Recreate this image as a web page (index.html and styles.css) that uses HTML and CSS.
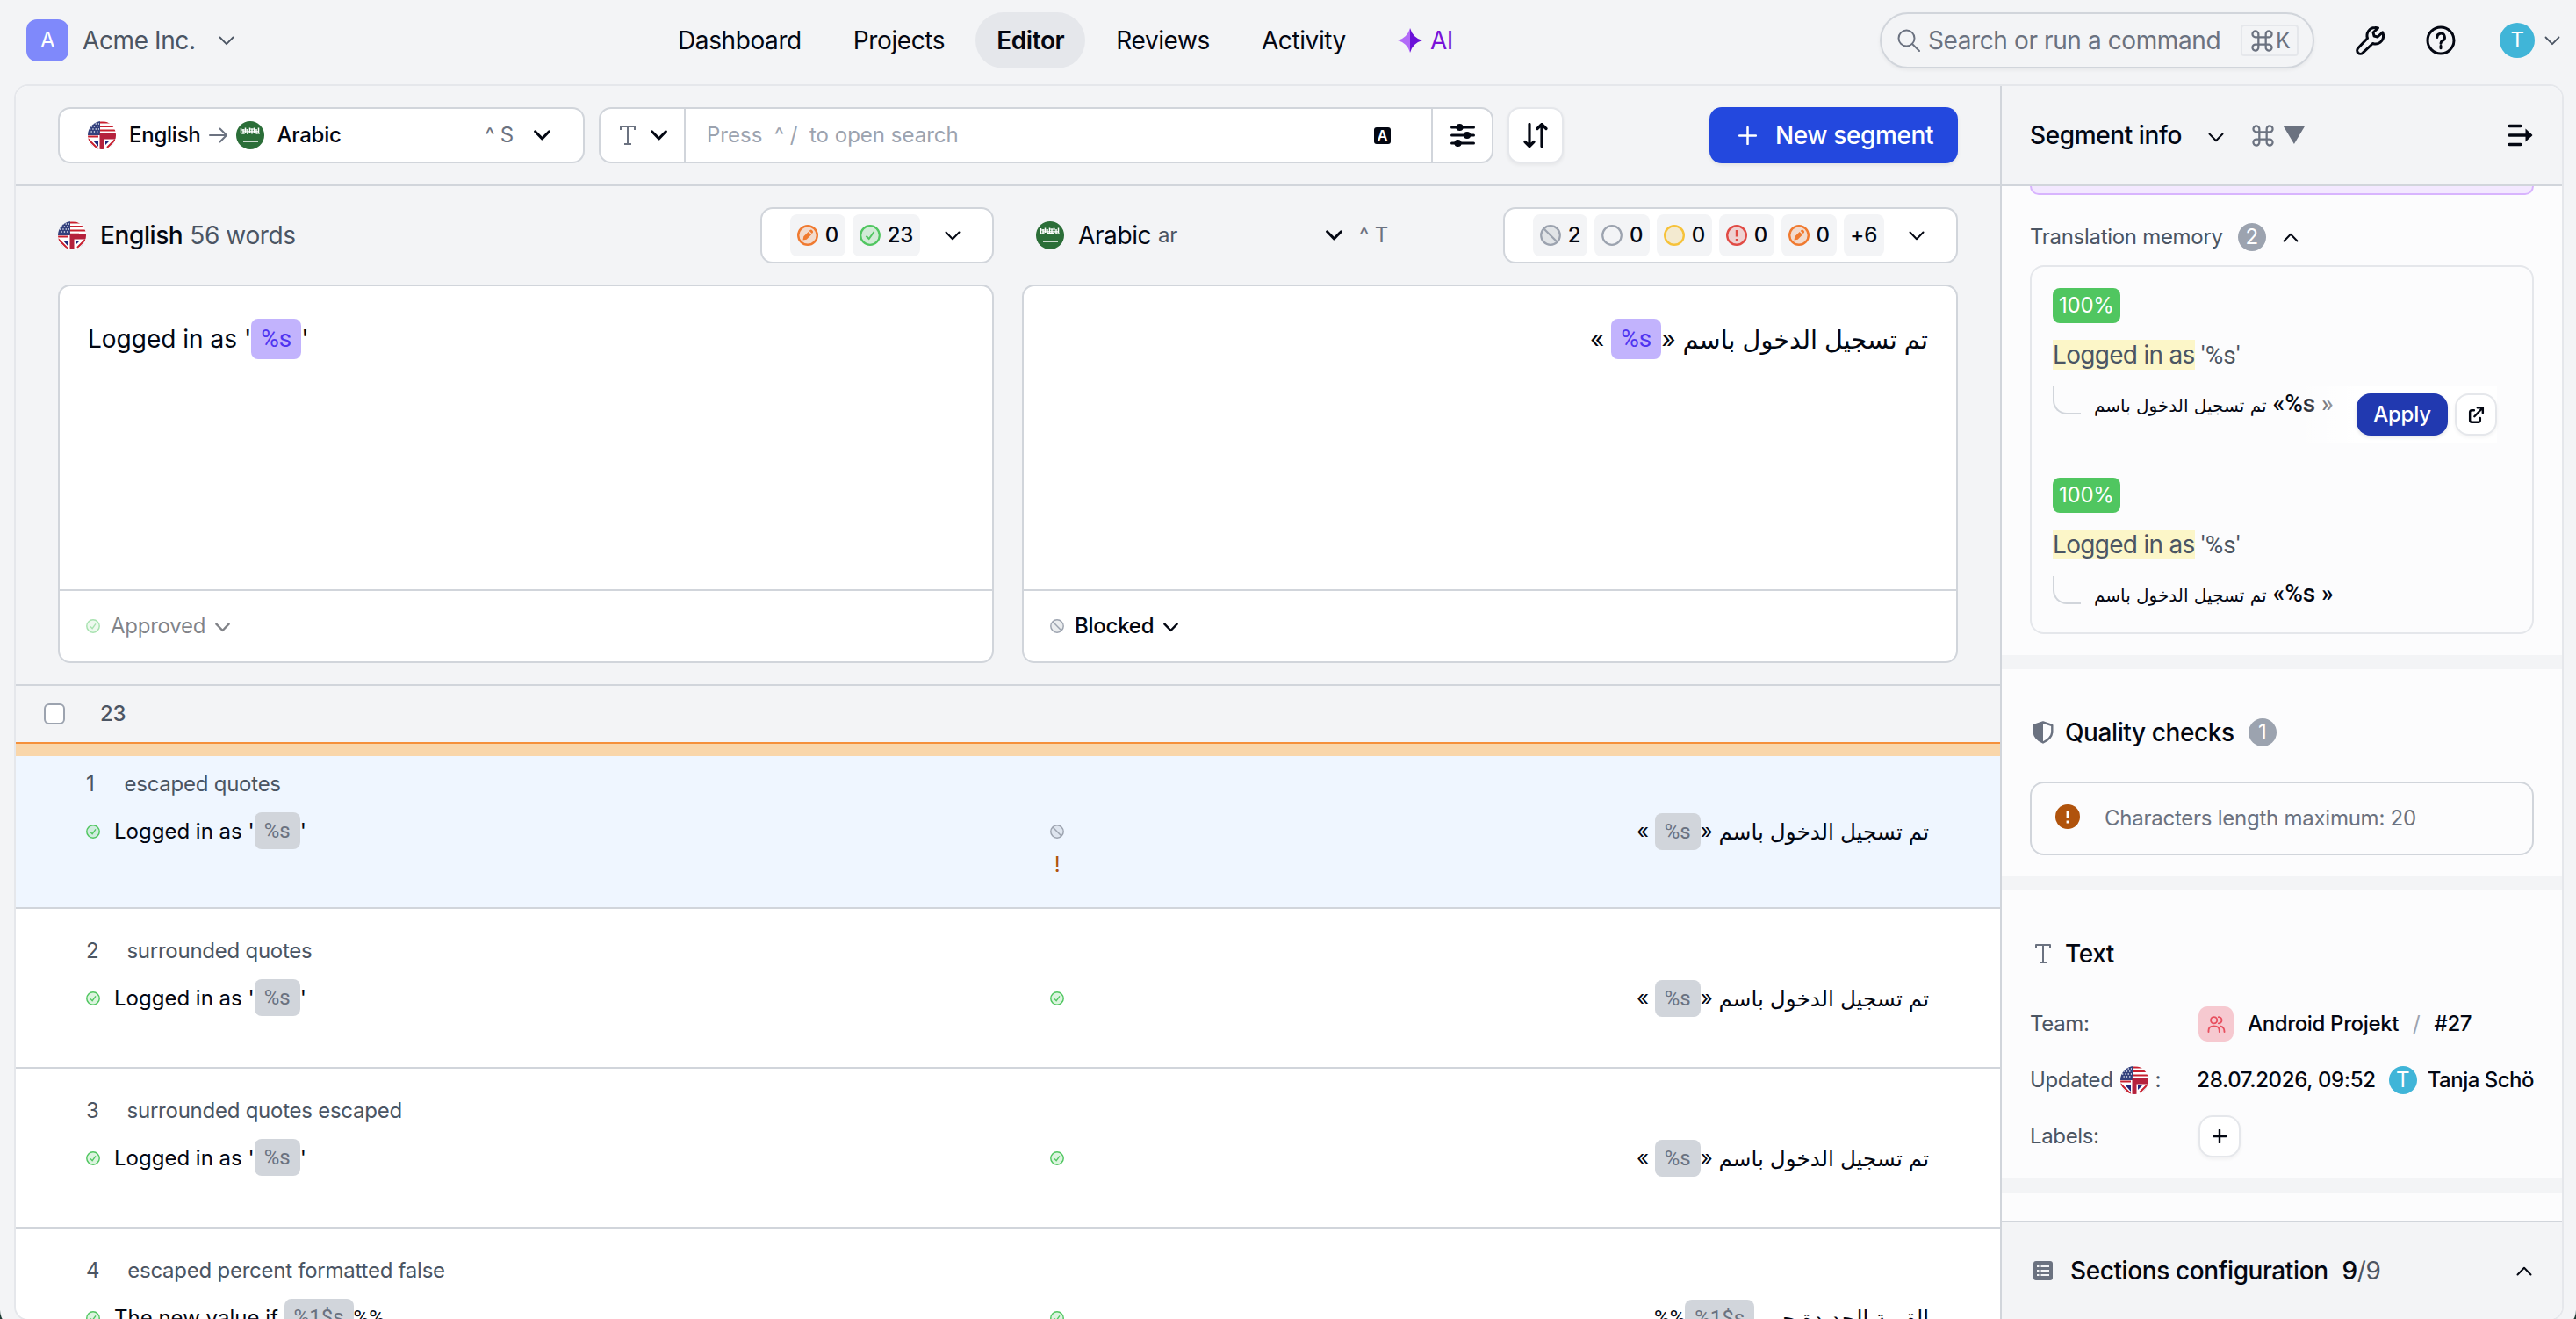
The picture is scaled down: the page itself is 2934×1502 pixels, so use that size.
FILE: index.html
```html
<!DOCTYPE html>
<html lang="en">
<head>
<meta charset="utf-8">
<title>Editor</title>
<link rel="stylesheet" href="styles.css">
</head>
<body>
<svg class="defs" aria-hidden="true">
  <symbol id="down" viewBox="0 0 18 11"><path d="M1.5 1.5 9 9.2l7.5-7.7"/></symbol>
  <symbol id="up" viewBox="0 0 18 11"><path d="M1.5 9.5 9 1.8l7.5 7.7"/></symbol>
  <symbol id="plus" viewBox="0 0 20 20"><path d="M10 1v18M1 10h18"/></symbol>
  <symbol id="approved" viewBox="0 0 24 24"><circle cx="12" cy="12" r="10.8" fill="#50c660" fill-opacity=".2" stroke="#50c660" stroke-width="2.2"/><path d="m7.5 12.8 3.2 3.2 5.8-8" fill="none" stroke="#50c660" stroke-width="2"/></symbol>
  <symbol id="blocked" viewBox="0 0 24 24"><circle cx="12" cy="12" r="10.8" fill="#9ca3af" fill-opacity=".2" stroke="#9ca3af" stroke-width="2.2"/><path d="m5 5 14 14" stroke="#9ca3af" stroke-width="2.2"/></symbol>
  <symbol id="draft" viewBox="0 0 24 24"><circle cx="12" cy="12" r="10.8" fill="#f07a30" fill-opacity=".2" stroke="#f07a30" stroke-width="2.4"/><path d="m6.500 17.500.8-4.200 5.400-5.400 3.400 3.400-5.400 5.400zM13.700 6.900l1-1q1.300-.8 2.600.500t.5 2.700l-1 1z" fill="#f07a30"/></symbol>
  <symbol id="empty" viewBox="0 0 24 24"><circle cx="12" cy="12" r="10.8" fill="none" stroke="#9ca3af" stroke-width="2.2"/></symbol>
  <symbol id="pending" viewBox="0 0 24 24"><circle cx="12" cy="12" r="10.8" fill="#f6c23a" fill-opacity=".2" stroke="#f6c23a" stroke-width="2.4"/></symbol>
  <symbol id="rejected" viewBox="0 0 24 24"><circle cx="12" cy="12" r="10.8" fill="#e14b45" fill-opacity=".2" stroke="#e14b45" stroke-width="2.4"/><path d="M12 6v7.5M12 16v2.3" stroke="#e14b45" stroke-width="2.4"/></symbol>
  <symbol id="en" viewBox="0 0 32 32">
    <clipPath id="disc"><circle cx="16" cy="16" r="16"/></clipPath>
    <g clip-path="url(#disc)">
      <path fill="#fff" d="M0 0h32v32H0z"/>
      <path stroke="#c8202f" stroke-width="2.2" d="M14 1.5h18M14 6h18M14 10.5h18M14 14.8h10"/>
      <path fill="#33407c" d="M0 0h14v16H0z"/>
      <path stroke="#dfe3f0" stroke-width="1.3" stroke-dasharray="1.3 2" d="M2 3h11M3.500 6h10M2 9h11M3.500 12h10"/>
      <path fill="#20267a" d="M0 22.500 9 32H0zM6 22h6v7zM20 22h5l-5 5zM32 22v10h-9z"/>
      <path fill="#fff" d="M0 16h14v4H0z"/>
      <path stroke="#c8202f" stroke-width="2" d="m0 20 12 12M31 21l-9 9M0 17.500h12"/>
      <path fill="#fff" d="M12 18h8v14h-8z"/>
      <path fill="#b5213c" d="M14 14h18v6.500H14zM13.500 14h5v18h-5z"/>
    </g>
  </symbol>
  <symbol id="ar" viewBox="0 0 32 32">
    <circle cx="16" cy="16" r="16" fill="#2b6e38"/>
    <g fill="none" stroke="#fff" stroke-width="1.500">
      <path d="M5.500 8v6M8 9v5.500M10.500 7.500V13M13 9v6M15.500 7.500V13M18 8.500v6M20.500 7.500v6M23 9v5.500M25.500 7.500v6"/>
      <path d="M5 10h8m2-1h7M5 14h5m3-.5h8m2 .5h4M8 11.800h18" stroke-width="1.200"/>
      <path d="M8 23h15m1-1v2"/>
    </g>
  </symbol>
  <symbol id="serif-t" viewBox="0 0 20 24"><path d="M2 6V2h16v4M10 2v20M6 22h8" fill="none"/></symbol>
  <symbol id="cmd" viewBox="0 0 24 24"><path d="M8 8h8v8H8zM8 8V5a3.300 3.300 0 1 0-3.300 3H8M16 8h3a3.300 3.300 0 1 0-3-3.300V8M16 16v3a3.300 3.300 0 1 0 3.300-3H16M8 16H5a3.300 3.300 0 1 0 3 3.300V16"/></symbol>
</svg>

<div class="app">
  <header class="top">
    <div class="org">
      <span class="org-logo">A</span><span class="org-name">Acme Inc.</span>
      <svg class="ic chev thin"><use href="#down"/></svg>
    </div>
    <nav class="nav">
      <a>Dashboard</a><a>Projects</a><a class="active">Editor</a><a>Reviews</a><a>Activity</a>
      <a class="ai"><svg class="spark" viewBox="0 0 28 28"><path fill="#b26bf8" d="M14 0v28Q11 17 0 14 11 11 14 0z"/><path fill="#6a11d8" d="M14 0v28Q17 17 28 14 17 11 14 0z"/></svg>AI</a>
    </nav>
    <div class="tools">
      <div class="command">
        <svg class="ic lens" viewBox="0 0 26 26"><circle cx="10.5" cy="10.5" r="9"/><path d="m17 17 8 8"/></svg>
        <span class="command-text">Search or run a command</span>
        <kbd><svg class="ic cmd"><use href="#cmd"/></svg>K</kbd>
      </div>
      <svg class="ic wrench" viewBox="0 0 34 34"><path d="M22 2.500a9 9 0 0 0-8.500 12L2.800 25.800a3.800 3.800 0 0 0 5.400 5.400L19.500 20.500a9 9 0 0 0 12-9.500q0-1.500-.8-3.200L25 13l-4-1-1-4 5.500-5.200q-1.500-.5-3.500-.3z"/></svg>
      <svg class="ic help" viewBox="0 0 34 34"><circle cx="17" cy="17" r="15"/><path d="M12.800 13.500a4.300 4.300 0 1 1 6.200 3.800q-2 1-2 3M17 23.200v2.600"/></svg>
      <span class="avatar">T</span>
      <svg class="ic chev thin user-chev"><use href="#down"/></svg>
    </div>
  </header>

  <div class="panel">
    <main class="main">
      <div class="toolbar">
        <div class="box langs">
          <svg class="flag"><use href="#en"/></svg><b>English</b>
          <svg class="ic arrow" viewBox="0 0 22 18"><path d="M1 9h19M12.500 1.500 20 9l-7.500 7.500"/></svg>
          <svg class="flag"><use href="#ar"/></svg><b>Arabic</b>
          <span class="key push">^ S</span><svg class="ic chev"><use href="#down"/></svg>
        </div>
        <div class="box finder">
          <div class="finder-type"><svg class="ic t-icon"><use href="#serif-t"/></svg><svg class="ic chev"><use href="#down"/></svg></div>
          <div class="finder-input"><span>Press&nbsp; ^ /&nbsp; to open search</span><span class="case">A</span></div>
          <div class="finder-filter"><svg class="ic sliders" viewBox="0 0 28 28"><path d="M1.500 5h25M1.500 14h25M1.500 23h25"/><circle cx="10.500" cy="5" r="2.600"/><circle cx="19" cy="14" r="2.600"/><circle cx="8.500" cy="23" r="2.600"/></svg></div>
        </div>
        <div class="sort"><svg class="ic sort-icon" viewBox="0 0 28 28"><path d="M7 1.500v25M2 21.500l5 5 5-5M21 26.500v-25M16 6.500l5-5 5 5"/></svg></div>
        <button class="new"><svg class="ic plus"><use href="#plus"/></svg>New segment</button>
      </div>

      <div class="editors">
        <section class="lang">
          <div class="lang-head">
            <svg class="flag"><use href="#en"/></svg><b class="name">English</b><span class="words">56 words</span>
            <div class="box statuses">
              <span class="chip"><svg><use href="#draft"/></svg>0</span><span class="chip"><svg><use href="#approved"/></svg>23</span>
              <svg class="ic chev mid"><use href="#down"/></svg>
            </div>
          </div>
          <div class="box card">
            <div class="text">Logged in as '<span class="tag">%s</span>'</div>
            <div class="foot faded"><svg class="state"><use href="#approved"/></svg>Approved<svg class="ic chev small"><use href="#down"/></svg></div>
          </div>
        </section>
        <section class="lang">
          <div class="lang-head target">
            <svg class="flag"><use href="#ar"/></svg><span class="name">Arabic</span><span class="code">ar</span>
            <svg class="ic chev"><use href="#down"/></svg><span class="key">^ T</span>
            <div class="box statuses">
              <span class="chip"><svg><use href="#blocked"/></svg>2</span><span class="chip"><svg><use href="#empty"/></svg>0</span><span class="chip"><svg><use href="#pending"/></svg>0</span><span class="chip"><svg><use href="#rejected"/></svg>0</span><span class="chip"><svg><use href="#draft"/></svg>0</span><span class="chip">+6</span>
              <svg class="ic chev mid"><use href="#down"/></svg>
            </div>
          </div>
          <div class="box card">
            <div class="text" dir="rtl"><span class="script">تم تسجيل الدخول باسم</span> «<span class="tag" dir="ltr">%s</span> »</div>
            <div class="foot"><svg class="state"><use href="#blocked"/></svg><b>Blocked</b><svg class="ic chev small"><use href="#down"/></svg></div>
          </div>
        </section>
      </div>

      <div class="count"><span class="check"></span><b>23</b></div>

      <div class="row current">
        <div class="row-name"><span>1</span><span>escaped quotes</span></div>
        <div class="pair">
          <svg class="state"><use href="#approved"/></svg><div class="src">Logged in as '<span class="tag">%s</span>'</div>
          <svg class="state"><use href="#blocked"/></svg><div class="dst" dir="rtl"><span class="script">تم تسجيل الدخول باسم</span> «<span class="tag" dir="ltr">%s</span> »</div>
        </div>
        <div class="warn">!</div>
      </div>
      <div class="row">
        <div class="row-name"><span>2</span><span>surrounded quotes</span></div>
        <div class="pair">
          <svg class="state"><use href="#approved"/></svg><div class="src">Logged in as '<span class="tag">%s</span>'</div>
          <svg class="state"><use href="#approved"/></svg><div class="dst" dir="rtl"><span class="script">تم تسجيل الدخول باسم</span> «<span class="tag" dir="ltr">%s</span> »</div>
        </div>
      </div>
      <div class="row">
        <div class="row-name"><span>3</span><span>surrounded quotes escaped</span></div>
        <div class="pair">
          <svg class="state"><use href="#approved"/></svg><div class="src">Logged in as '<span class="tag">%s</span>'</div>
          <svg class="state"><use href="#approved"/></svg><div class="dst" dir="rtl"><span class="script">تم تسجيل الدخول باسم</span> «<span class="tag" dir="ltr">%s</span> »</div>
        </div>
      </div>
      <div class="row">
        <div class="row-name"><span>4</span><span>escaped percent formatted false</span></div>
        <div class="pair">
          <svg class="state"><use href="#approved"/></svg><div class="src">The new value if <span class="tag">%1$s</span><span class="pct">%%</span></div>
          <svg class="state"><use href="#approved"/></svg><div class="dst" dir="rtl"><span class="script last">القيمة الجديدة حـ</span> <span class="tag" dir="ltr">%1$s</span><span class="pct">%%</span></div>
        </div>
      </div>
    </main>

    <aside class="side">
      <div class="side-head"><b>Segment info</b><svg class="ic chev mid"><use href="#down"/></svg><svg class="ic cmd"><use href="#cmd"/></svg><i class="tri"></i>
        <svg class="ic collapse" viewBox="0 0 30 26"><path d="M2 2.500h13M2 23.500h13M2 13h24"/><path d="m20.500 5.500 8 7.500-8 7.500z" fill="currentColor" stroke="none"/></svg></div>
      <div class="side-body">
        <div class="peek"></div>
        <div class="tm-title">Translation memory<span class="num">2</span><svg class="ic chev mid"><use href="#up"/></svg></div>
        <div class="tm">
          <div class="match">
            <span class="score">100%</span>
            <div class="m-src"><mark>Logged in as</mark> <span class="pct">'%s'</span></div>
            <div class="m-dst"><i class="elbow"></i><bdi dir="ltr"><span class="small-script">تم تسجيل الدخول باسم</span> «%s »</bdi></div>
            <div class="actions"><button class="apply">Apply</button><span class="mini"><svg class="ic ext" viewBox="0 0 20 22"><path d="M7 5H4Q1.500 5 1.500 7.500V18q0 2.500 2.500 2.500h8.500Q15 20.500 15 18v-3M11.500 1.500h7v7M18 2 7.500 13"/></svg></span></div>
          </div>
          <div class="match">
            <span class="score">100%</span>
            <div class="m-src"><mark>Logged in as</mark> <span class="pct">'%s'</span></div>
            <div class="m-dst"><i class="elbow"></i><bdi dir="ltr"><span class="small-script">تم تسجيل الدخول باسم</span> «%s »</bdi></div>
          </div>
        </div>
        <div class="band"></div>
        <div class="title quality"><svg class="shield" viewBox="0 0 24 26"><path d="M12 1.500 22.300 5v8q-.8 7-10.300 11.500Q2.500 20 1.700 13V5z" fill="none" stroke="#6b7280" stroke-width="2.400" stroke-linejoin="round"/><path d="M12 1.500 1.700 5v8q.8 7 10.300 11.500z" fill="#6b7280"/></svg><b>Quality checks</b><span class="num">1</span></div>
        <div class="issue"><svg class="bang" viewBox="0 0 28 28"><circle cx="14" cy="14" r="14" fill="#b0530c"/><path d="M14 7v8.500M14 18.500v3" stroke="#fff" stroke-width="2.800"/></svg>Characters length maximum: 20</div>
        <div class="band"></div>
        <div class="title text-title"><svg class="ic t-icon"><use href="#serif-t"/></svg><b>Text</b></div>
        <div class="fields">
          <div class="field"><span class="label">Team:</span><span class="team"><svg class="ic people" viewBox="0 0 22 20"><circle cx="8" cy="5" r="3.800"/><path d="M1.500 19v-1.500q0-5.500 6.500-5.500t6.500 5.500V19M13.500 1.200a3.800 3.800 0 0 1 0 7.600M16 12.300q4.500 1 4.500 6.700"/></svg></span><b class="proj">Android Projekt</b><span class="slash">/</span><b>#27</b></div>
          <div class="field"><span class="label">Updated <svg class="flag"><use href="#en"/></svg> :</span><b class="date">28.07.2026, 09:52</b><span class="avatar tiny">T</span><b class="who">Tanja Schö</b></div>
          <div class="field"><span class="label">Labels:</span><span class="mini"><svg class="ic plus"><use href="#plus"/></svg></span></div>
        </div>
        <div class="band"></div>
      </div>
      <div class="side-foot"><svg class="list" viewBox="0 0 22 22"><rect width="22" height="22" rx="3" fill="#6b7280"/><path d="M4 6h2.500M4 11h2.500M4 16h2.500M8.500 6H18M8.500 11H18M8.500 16H18" stroke="#f3f4f6" stroke-width="1.900"/></svg><b>Sections configuration</b><span class="total"><b>9</b>/9</span><svg class="ic chev mid"><use href="#up"/></svg></div>
    </aside>
  </div>
</div>
</body>
</html>
```
FILE: styles.css
```css
* { box-sizing: border-box; }
html { background: #1d3a33; overflow: hidden; }
body { margin: 0; height: 1502px; overflow: hidden; font: 400 24px/32px Inter, "DejaVu Sans", sans-serif; color: #030712; letter-spacing: -0.25px; }
b { font-weight: 500; }
svg { display: block; flex: none; }
button { font: inherit; letter-spacing: inherit; border: 0; }
.defs { position: absolute; width: 0; height: 0; }

.ic { fill: none; stroke: currentColor; stroke-width: 2.4; stroke-linecap: round; stroke-linejoin: round; }
.chev { width: 19px; height: 12px; stroke-width: 2.8; }
.chev.mid { width: 18px; height: 11px; stroke-width: 2; }
.chev.thin { width: 18px; height: 11px; stroke-width: 1.8; color: #4b5563; }
.chev.small { width: 17px; height: 11px; stroke-width: 2.6; }
.flag { width: 32px; height: 32px; }
.box { background: #fff; border: 2px solid #d1d5db; border-radius: 14px; }
.key { color: #6b7280; }

.app { display: flex; flex-direction: column; height: 1512px; padding: 0 14px 8px 16px; background: #f3f4f6; border-radius: 0 0 20px 20px; }

/* top bar */
.top { display: flex; flex: none; align-items: center; height: 96px; padding-bottom: 4px; font-size: 28px; letter-spacing: -0.4px; }
.org { display: flex; align-items: center; width: 732px; padding-left: 14px; color: #4b5563; }
.org-logo { width: 48px; height: 48px; border-radius: 12px; background: #7f89fb; color: #fff; font-size: 24px; line-height: 48px; text-align: center; }
.org-name { width: 155px; margin-left: 16px; }
.nav { display: flex; align-items: center; gap: 11px; }
.nav a { display: flex; align-items: center; height: 64px; padding: 0 24px; border-radius: 32px; }
.nav .active { background: #e5e7eb; font-weight: 600; }
.nav .ai { gap: 9px; color: #7a12d8; }
.spark { width: 28px; height: 28px; }
.tools { display: flex; align-items: center; margin-left: auto; padding-right: 4px; }
.command { display: flex; align-items: center; width: 495px; height: 64px; padding: 0 16px 0 18px; border: 2px solid #d1d5db; border-radius: 32px; color: #6b7280; box-shadow: 0 2px 4px rgba(0,0,0,.05); }
.lens { width: 26px; height: 26px; stroke-width: 2; }
.command-text { margin-left: 9px; }
.command kbd { display: flex; align-items: center; gap: 3px; width: 66px; height: 36px; margin-left: auto; padding: 0 8px 0 10px; border: 2px solid #e5e7eb; border-radius: 4px; font: 400 25px/32px Inter, sans-serif; }
.cmd { width: 25px; height: 25px; color: #6b7280; stroke-width: 2.2; }
.wrench { width: 34px; height: 34px; margin-left: 47px; stroke-width: 3; }
.help { width: 34px; height: 34px; margin-left: 46px; stroke-width: 3; }
.avatar { flex: none; width: 40px; height: 40px; margin-left: 50px; border-radius: 50%; background: #40b5d8; color: #fff; font-size: 24px; line-height: 40px; text-align: center; }
.user-chev { margin-left: 11px; }

/* main panel */
.panel { display: flex; flex: none; height: 1408px; border: 2px solid #e5e7eb; border-radius: 16px; overflow: hidden; }
.main { display: flex; flex-direction: column; width: 2262px; border-right: 2px solid #d1d5db; background: #fff; }
.toolbar { display: flex; flex: none; height: 114px; padding: 24px 48px; border-bottom: 2px solid #d1d5db; background: #f3f4f6; }
.langs { display: flex; align-items: center; width: 600px; height: 64px; padding: 0 37px 0 32px; }
.langs b { margin-left: 15px; }
.arrow { width: 22px; height: 18px; margin: 0 9px; color: #6b7280; stroke-width: 2; }
.push { margin-left: auto; margin-right: 23px; }
.finder { display: flex; width: 1019px; height: 64px; margin-left: 16px; }
.finder-type { display: flex; align-items: center; gap: 16px; width: 97px; padding-left: 21px; border-right: 2px solid #d1d5db; }
.t-icon { width: 20px; height: 24px; color: #6b7280; stroke-width: 2; stroke-linecap: butt; }
.finder-input { display: flex; flex: 1; align-items: center; justify-content: space-between; padding: 0 46px 0 24px; border-right: 2px solid #d1d5db; color: #9ca3af; letter-spacing: 0; }
.case { width: 19px; height: 19px; border-radius: 3px; background: #030712; color: #fff; font-size: 16px; font-weight: 600; line-height: 19px; text-align: center; }
.finder-filter { display: flex; align-items: center; justify-content: center; width: 67px; }
.sliders { width: 28px; height: 28px; stroke-width: 3; }
.sliders circle { fill: currentColor; }
.sort { display: flex; align-items: center; justify-content: center; width: 64px; height: 64px; margin-left: 16px; border: 2px solid #e5e7eb; border-radius: 14px; background: #fff; box-shadow: 0 2px 4px rgba(0,0,0,.06); }
.sort-icon { width: 28px; height: 28px; stroke-width: 3.2; }
.new { display: flex; align-items: center; gap: 21px; width: 283px; height: 64px; margin-left: auto; padding: 0 0 0 33px; border-radius: 14px; background: #2348de; color: #fff; font-size: 28px; font-weight: 500; letter-spacing: -0.4px; box-shadow: 0 2px 4px rgba(0,0,0,.08); }
.new .plus { width: 21px; height: 21px; }

/* source and target editors */
.editors { display: flex; flex: none; gap: 32px; height: 569px; padding: 24px 48px; border-bottom: 2px solid #d1d5db; background: #f3f4f6; }
.lang { width: 1066px; }
.lang-head { display: flex; align-items: center; height: 64px; }
.name { margin-left: 16px; font-size: 28px; letter-spacing: -0.4px; }
.words { margin-left: 8px; color: #4b5563; font-size: 28px; letter-spacing: -0.4px; }
.code { width: 191px; margin-left: 8px; color: #4b5563; }
.target { padding-left: 16px; }
.target > .key { margin-left: 19px; }
.statuses { display: flex; align-items: center; gap: 8px; height: 64px; margin-left: auto; padding: 0 36px 0 32px; }
.statuses > .chev { margin-left: 20px; }
.chip { display: flex; align-items: center; gap: 8px; height: 48px; padding: 0 8px 0 7.6px; border-radius: 8px; background: #f3f4f6; font-weight: 500; }
.chip svg { width: 24px; height: 24px; }
.card { display: flex; flex-direction: column; justify-content: space-between; height: 431px; margin-top: 24px; }
.text { padding: 35px 32px 0; font-size: 28px; line-height: 50px; letter-spacing: 0; }
.script { position: relative; top: 1px; font-size: 1.028em; line-height: 1; }
.last { margin-left: 18px; }
.pct { font-family: Roboto, sans-serif; letter-spacing: 0; }
.tag { display: inline-block; padding: 0 11px; border-radius: 8px; background: #d1d5db; color: #6b7280; font-family: Roboto, sans-serif; line-height: 42px; vertical-align: middle; position: relative; top: -2px; }
.text .tag { padding: 0 11px; background: #c2b3fd; color: #4f35f0; line-height: 46px; }
.foot { display: flex; align-items: center; height: 82px; padding: 0 30px; border-top: 2px solid #d1d5db; font-size: 24px; }
.state { width: 16px; height: 16px; }
.foot .state { margin-right: 12px; }
.foot .chev { margin-left: 11px; margin-top: 2px; }
.faded > * { opacity: .5; }
.faded { color: rgba(3,7,18,.5); }
.faded > .chev { opacity: 1; }

/* segment list */
.count { display: flex; flex: none; align-items: center; gap: 40px; height: 64px; padding-left: 32px; background: #f3f4f6; color: #4b5563; }
.check { width: 24px; height: 24px; border: 2px solid #9ca3af; border-radius: 6px; background: #fff; }
.row { flex: none; height: 182px; padding: 32px 32px 0 80px; border-bottom: 2px solid #d1d5db; }
.current { height: 190px; padding-top: 30px; border-top: 2px solid #f5903a; background: linear-gradient(#f9d6aa 14px, #eff6ff 14px); }
.row-name { display: flex; gap: 32px; color: #4b5563; }
.current .row-name { gap: 34px; }
.pair { display: grid; grid-template-columns: 16px 1082px 16px 1fr; align-items: center; height: 44px; margin-top: 16px; letter-spacing: 0; line-height: 44px; }
.src, .dst { white-space: nowrap; height: 44px; }
.src { padding-left: 16px; }
.dst { padding-right: 49px; }
.dst .tag { top: -1px; }
.warn { width: 16px; margin-left: 1098px; color: #b0530c; text-align: center; }

/* segment details */
.side { display: flex; flex: 1; min-width: 0; flex-direction: column; background: #fcfcfd; }
.side-head { display: flex; flex: none; align-items: center; height: 114px; padding: 0 32px; border-bottom: 2px solid #d1d5db; background: #f3f4f6; font-size: 28px; letter-spacing: -0.4px; }
.side-head .chev { margin: 4px 32px 0 30px; }
.tri { width: 24px; height: 20px; margin-left: 11px; background: #6b7280; clip-path: polygon(0 0, 100% 0, 50% 100%); }
.collapse { width: 30px; height: 26px; margin-left: auto; stroke-width: 3.4; }
.side-body { flex: 1; overflow: hidden; }
.peek { height: 10px; margin: 0 32px; border: 2px solid #d8b4fe; border-top: 0; border-radius: 0 0 12px 12px; background: #f3e8ff; }
.tm-title { display: flex; align-items: center; margin: 32px 32px 0; color: #4b5563; letter-spacing: -0.3px; }
.num { width: 32px; height: 32px; margin-left: 16px; border-radius: 50%; background: #9ca3af; color: #fff; font-size: 24px; line-height: 32px; text-align: center; }
.tm-title .num { margin-left: 17px; }
.tm-title .chev { margin-left: 19px; color: #030712; }
.tm { display: flex; flex-direction: column; gap: 40px; height: 420px; margin: 16px 32px 24px; padding: 24px; border: 2px solid #e5e7eb; border-radius: 16px; }
.match { position: relative; flex: none; height: 176px; }
.score { display: inline-block; height: 40px; padding: 0 7px; border-radius: 8px; background: #50c660; color: #fff; font-size: 24px; line-height: 40px; vertical-align: top; }
.m-src { height: 56px; margin-top: 8px; color: #4b5563; font-size: 28px; line-height: 56px; letter-spacing: -0.7px; }
mark { background: #fcf6c8; color: inherit; }
.m-dst { display: flex; height: 48px; margin-top: 8px; font-family: Roboto, sans-serif; font-size: 28px; line-height: 40px; font-weight: 500; letter-spacing: 0; }
.small-script { font: 400 20px/1 "DejaVu Sans", sans-serif; }
.elbow { width: 32px; height: 32px; margin-right: 15px; border: solid #d1d5db; border-width: 0 0 2px 2px; border-bottom-left-radius: 16px; }
.actions { position: absolute; top: 112px; left: 278px; display: flex; align-items: center; justify-content: flex-end; gap: 8px; width: 228px; height: 64px; background: linear-gradient(90deg, rgba(255,255,255,0), #fff 30%); }
.apply { height: 48px; padding: 0; width: 104px; border-radius: 16px; background: #2139b0; color: #fff; font-weight: 500; box-shadow: 0 2px 4px rgba(0,0,0,.1); }
.mini { display: flex; align-items: center; justify-content: center; width: 48px; height: 48px; border: 2px solid #e5e7eb; border-radius: 16px; background: #fff; box-shadow: 0 2px 4px rgba(0,0,0,.05); }
.ext { width: 19px; height: 19px; stroke-width: 2.8; }
.mini .plus { width: 16px; height: 16px; stroke-width: 3; }
.band { height: 16px; background: #f3f4f6; }
.title { display: flex; align-items: center; height: 128px; padding: 16px 32px 0 35px; font-size: 28px; letter-spacing: -0.4px; }
.title b { margin-left: 13px; }
.shield { width: 24px; height: 26px; }
.issue { display: flex; align-items: center; gap: 28px; height: 84px; margin: 0 32px 24px; padding-left: 27px; border: 2px solid #d1d5db; border-radius: 16px; color: #6b7280; }
.bang { width: 28px; height: 28px; margin-top: -4px; }
.text-title { height: 112px; padding: 32px 32px 0 37px; }
.text-title b { margin-left: 15px; }
.fields { margin-top: 8px; padding: 0 32px 16px; }
.field { display: flex; align-items: center; height: 64px; white-space: nowrap; letter-spacing: -0.35px; }
.field .label { display: flex; gap: 8px; width: 192px; color: #4b5563; }
.team { display: flex; align-items: center; justify-content: center; width: 40px; height: 40px; border-radius: 10px; background: #f6c9d0; color: #e8505f; }
.people { width: 21px; height: 19px; stroke-width: 2; }
.proj { margin-left: 16px; }
.slash { margin: 0 16px; color: #9ca3af; }
.avatar.tiny { width: 32px; height: 32px; margin: 0 12px 0 15px; line-height: 32px; }
.who { letter-spacing: -0.5px; }
.side-foot { display: flex; flex: none; align-items: center; height: 112px; padding: 0 34px 0 36px; border-top: 2px solid #d1d5db; background: #f3f4f6; font-size: 28px; letter-spacing: -0.4px; }
.list { width: 22px; height: 22px; }
.side-foot > b { margin-left: 20px; }
.total { margin-left: 16px; color: #4b5563; }
.total b { color: #030712; }
.side-foot .chev { margin-left: auto; }
```
